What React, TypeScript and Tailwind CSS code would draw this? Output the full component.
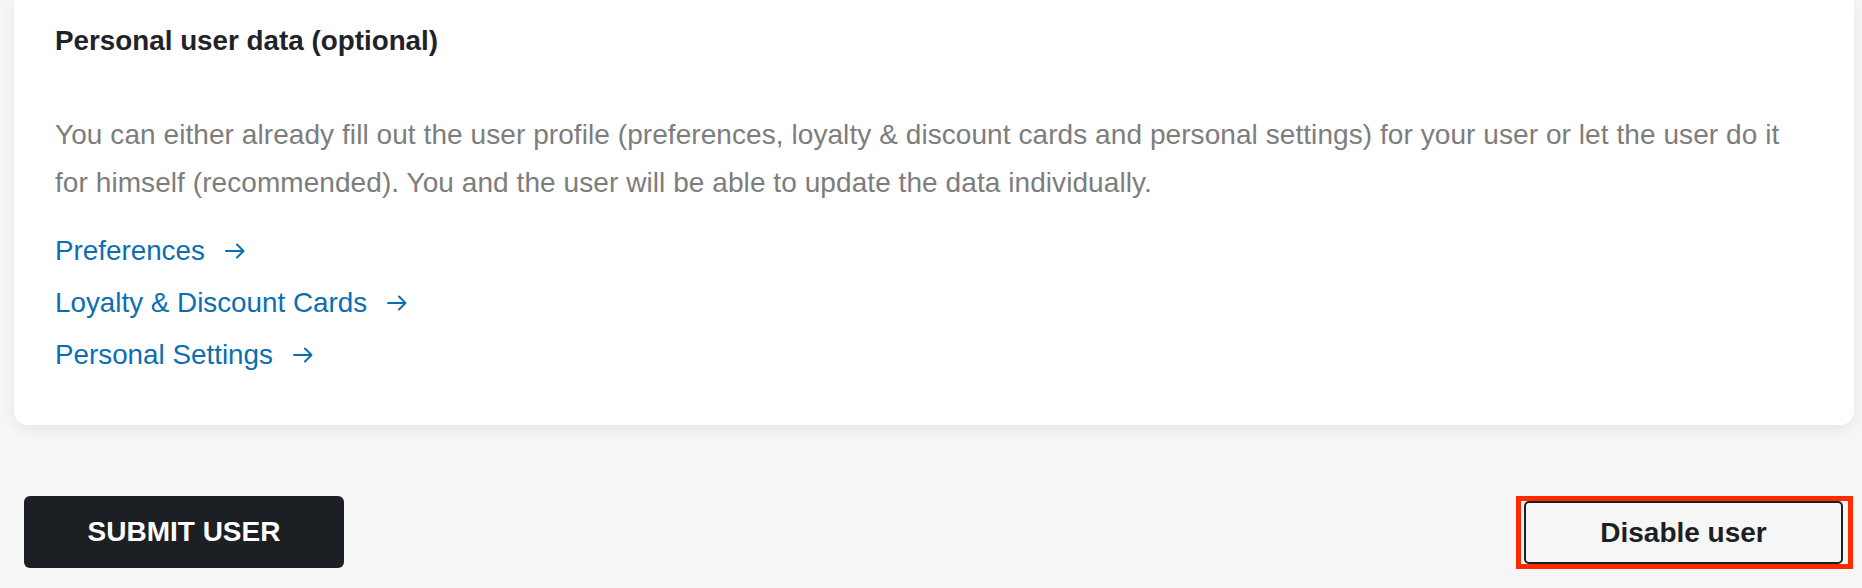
import React from 'react';

const links = ['Preferences', 'Loyalty & Discount Cards', 'Personal Settings'];

const Arrow: React.FC = () => (
  <svg width="20" height="16" viewBox="0 0 20 16" fill="none" stroke="currentColor" strokeWidth="2" strokeLinecap="round" strokeLinejoin="round">
    <path d="M1 8h17" />
    <path d="M12 1.5 18.5 8 12 14.5" />
  </svg>
);

const App: React.FC = () => {
  return (
    <div className="min-h-[588px] bg-[#f6f6f6] font-['Liberation_Sans',Arial,sans-serif]">
      <section className="ml-[14px] mr-[8px] rounded-b-[14px] bg-white px-[41px] pt-[25px] pb-[44px] shadow-[0_4px_14px_rgba(0,0,0,0.07)]">
        <h2 className="text-[27.8px] leading-[32px] font-bold text-[#1f2329]">
          Personal user data (optional)
        </h2>
        <p className="mt-[54px] max-w-[1740px] text-[28px] leading-[48px] tracking-[0.07px] text-[#7d7d7d]">
          You can either already fill out the user profile (preferences, loyalty &amp; discount cards and personal settings) for your user or let the user do it for himself (recommended). You and the user will be able to update the data individually.
        </p>
        <ul className="mt-[18px]">
          {links.map((label) => (
            <li key={label} className="h-[52px] leading-[52px]">
              <a href="#" className="inline-flex items-center gap-[20px] text-[27.8px] text-[#0b6eb1]">
                {label}
                <Arrow />
              </a>
            </li>
          ))}
        </ul>
      </section>

      <div className="mt-[71px] flex items-start justify-between pl-[24px] pr-[9px]">
        <button className="h-[72px] w-[320px] rounded-[6px] bg-[#1c1f24] text-[28px] font-bold uppercase text-white">
          Submit user
        </button>
        <div className="border-[5px] border-[#ff2a00] pl-[3px] pr-[5px]">
          <button className="h-[63px] w-[319px] rounded-[5px] border-2 border-[#1c1f24] text-[28px] font-bold text-[#1c1f24]">
            Disable user
          </button>
        </div>
      </div>
    </div>
  );
};

export default App;
